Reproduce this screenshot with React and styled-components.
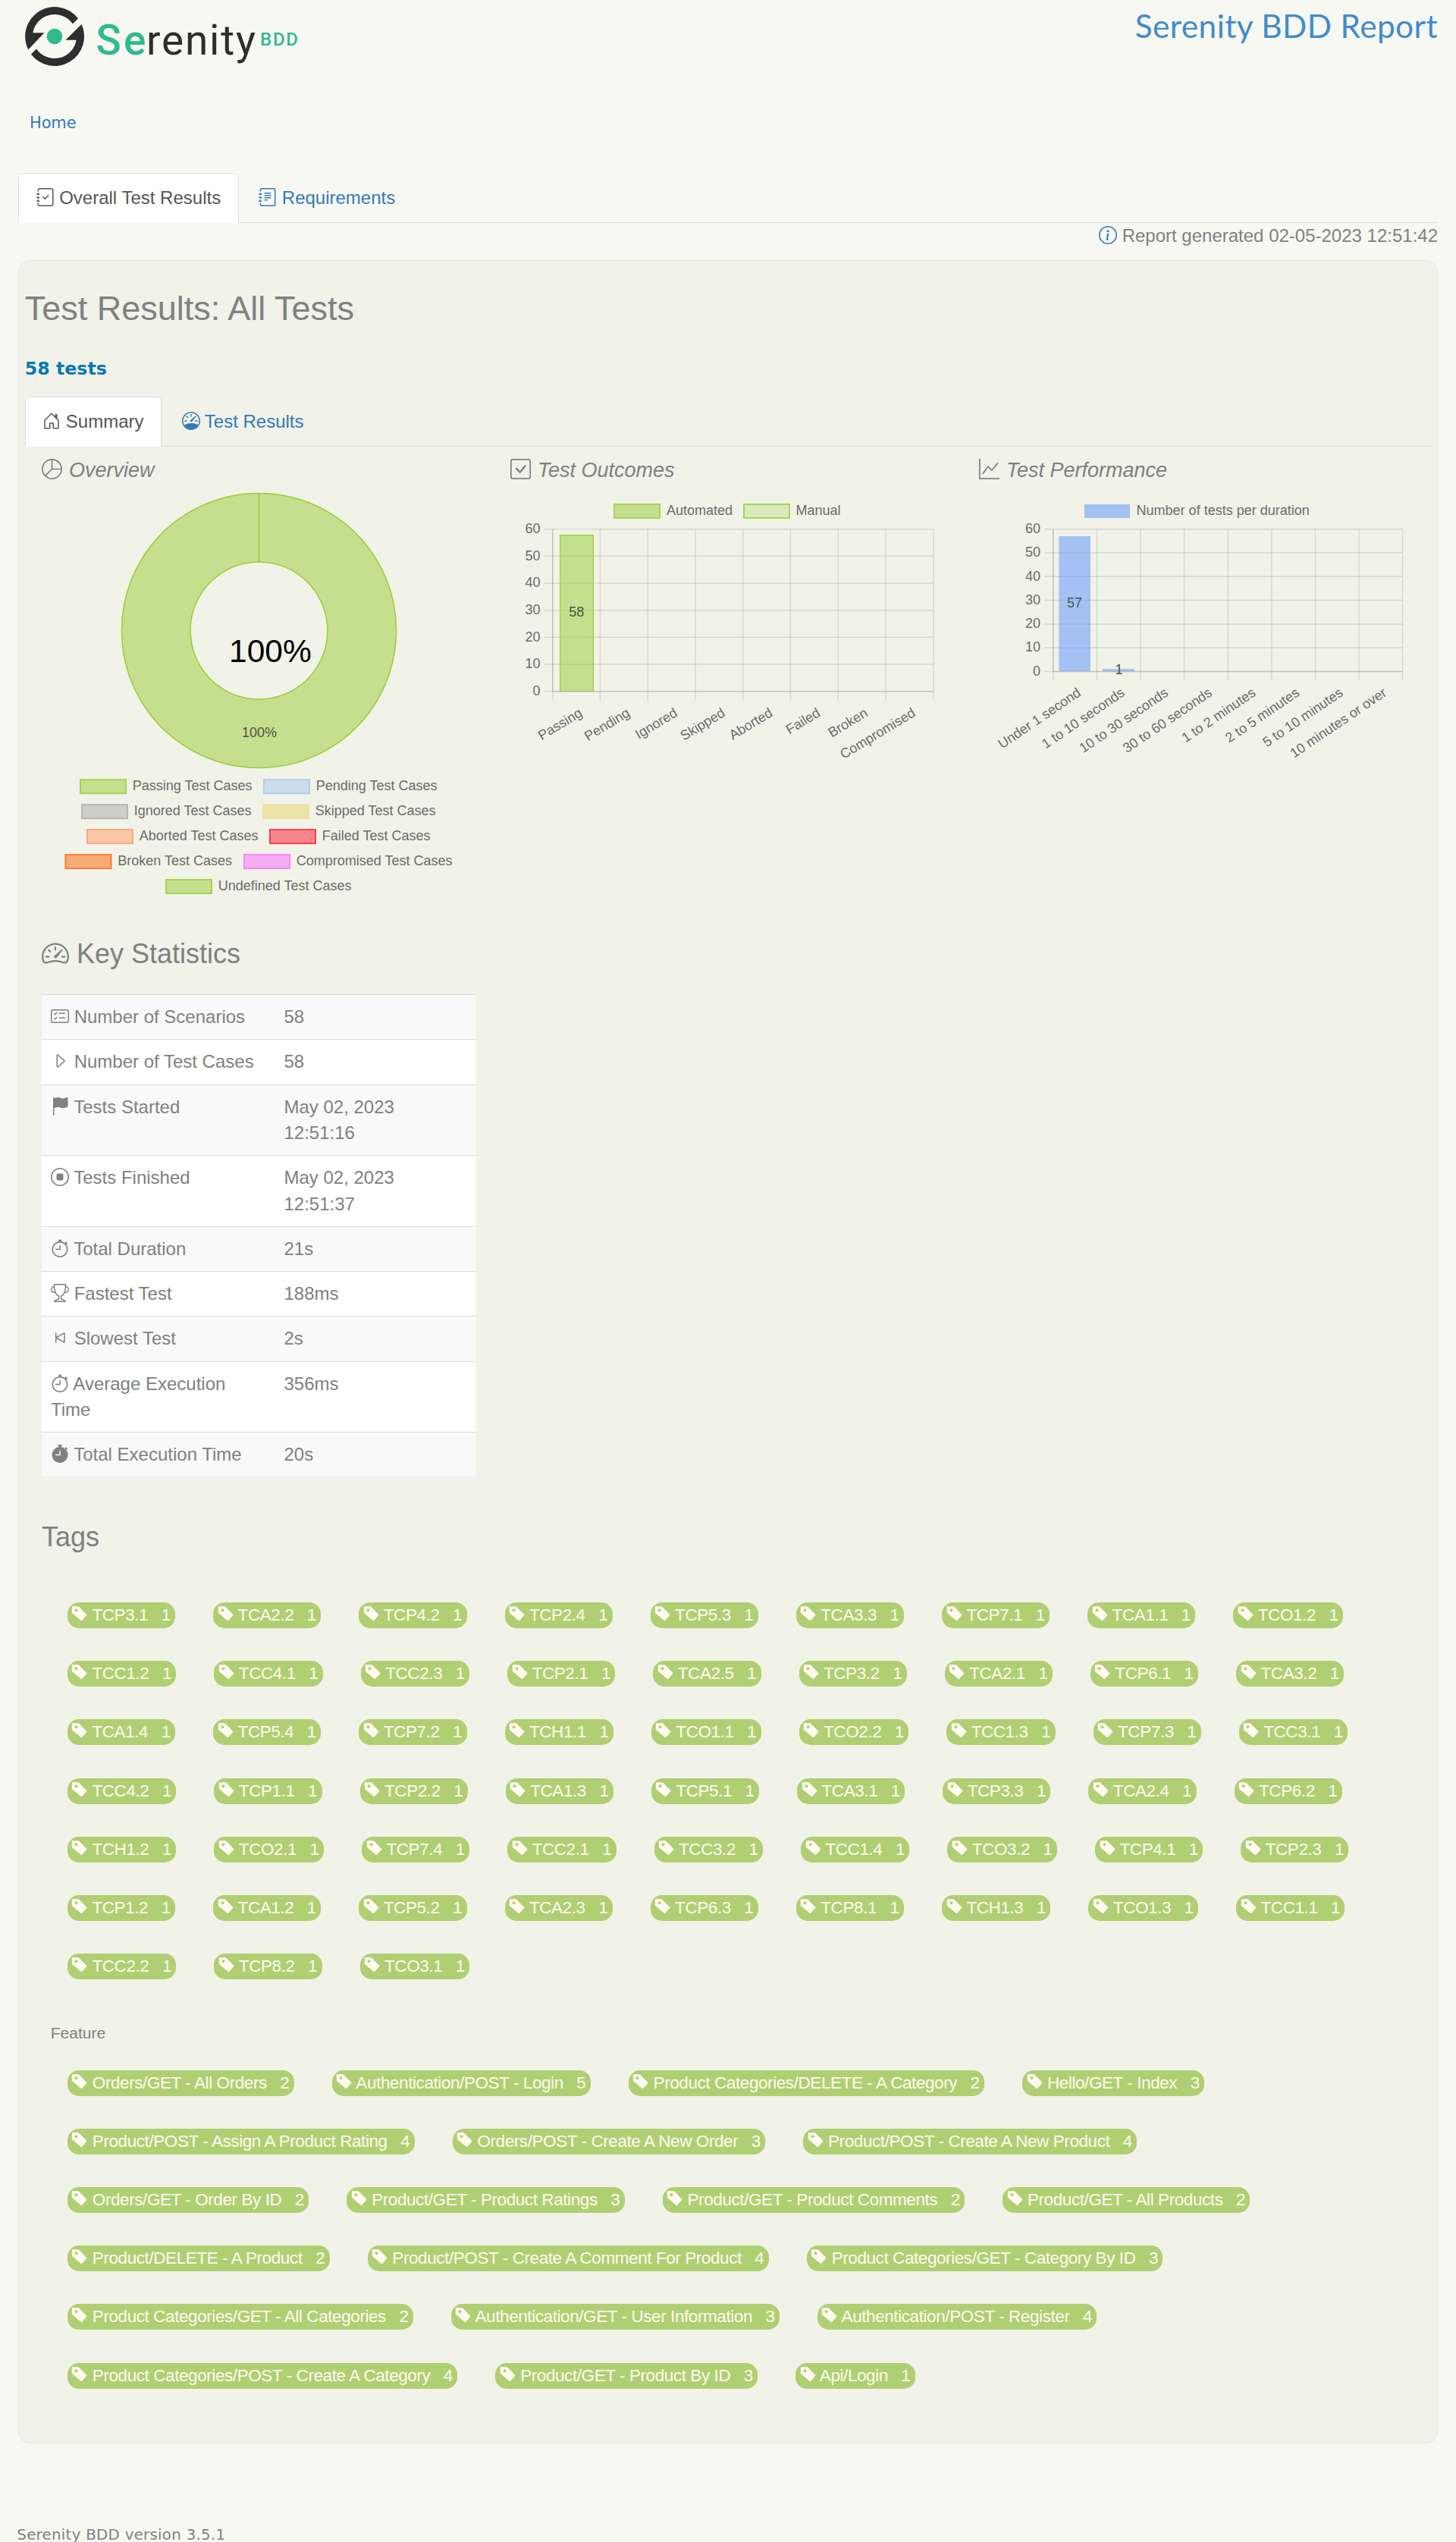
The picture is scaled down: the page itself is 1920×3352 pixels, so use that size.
import React from 'react';
import styled, { createGlobalStyle, css } from 'styled-components';
import {
  BsJournalCheck,
  BsJournalText,
  BsInfoCircle,
  BsHouseDoor,
  BsSpeedometer,
  BsSpeedometer2,
  BsPieChart,
  BsCheckSquare,
  BsGraphUp,
  BsCardChecklist,
  BsCaretRight,
  BsFlagFill,
  BsStopCircle,
  BsStopwatch,
  BsTrophy,
  BsSkipStart,
  BsStopwatchFill,
} from 'react-icons/bs';

const sans = '"Liberation Sans", Arial, sans-serif';
const wide = '"DejaVu Sans", Verdana, sans-serif';

const GlobalStyle = createGlobalStyle`
  *, *::before, *::after { box-sizing: border-box; }
  body {
    margin: 0;
    background: #f8f8f3;
    color: #808080;
    font: 24px/34.28px ${sans};
  }
`;

const Page = styled.div`
  height: 3352px;
  overflow: hidden;
  padding: 0 24px;
`;

const Header = styled.header`
  display: flex;
  justify-content: space-between;
  align-items: flex-start;
  height: 110px;
  padding: 4px 0 0 9px;
`;

const Logo = styled.svg`
  display: block;
  width: 364px;
  height: 90px;
`;

const ReportName = styled.div`
  font: 42.4px/60px Lato, sans-serif;
  letter-spacing: 0.4px;
  color: #428bca;
`;

const Breadcrumb = styled.nav`
  padding: 37px 0 51px 15px;
  font: 21px/30px ${wide};
  letter-spacing: -0.15px;
  color: #337ab7;
`;

const TabBar = styled.div`
  display: flex;
  gap: 3px;
  height: 66px;
  border-bottom: 1px solid #ddd;
`;

const Tab = styled.div`
  height: 66px;
  padding: 15px 22.5px 0;
  border: 1px solid transparent;
  border-bottom: 0;
  border-radius: 6px 6px 0 0;
  white-space: pre;
  color: #337ab7;
  ${(p) =>
    p.$active &&
    css`
      background: #fff;
      border-color: #ddd;
      color: #555;
    `}
  svg {
    vertical-align: -3px;
  }
`;

const Generated = styled.div`
  height: 34px;
  text-align: right;
  white-space: pre;
  svg {
    color: #337ab7;
    vertical-align: -3px;
  }
`;

const Panel = styled.main`
  height: 2879px;
  margin-top: 15px;
  padding: 37.5px 7.5px 0 7.7px;
  background: #f1f2e8;
  border: 1px solid #e7e8df;
  border-radius: 15px;
`;

const PageTitle = styled.h2`
  margin: 0;
  font-weight: 400;
  font-size: 45px;
  line-height: 49.5px;
`;

const TestCount = styled.div`
  margin: 38px 0 20px;
  font: bold 23.7px/34px ${wide};
  color: #0a78b0;
`;

const Columns = styled.div`
  display: grid;
  grid-template-columns: 573px 573px 590px;
  column-gap: 45px;
  padding: 16px 0 0 22.3px;
`;

const ChartTitle = styled.h4`
  margin: 0;
  height: 30px;
  font-size: 27px;
  line-height: 30px;
  font-weight: 400;
  font-style: italic;
  white-space: pre;
  svg {
    margin-right: 1.5px;
    vertical-align: -3.4px;
  }
`;

const Chart = styled.svg`
  display: block;
  text {
    font-family: ${sans};
    font-size: 18px;
    fill: #6b6b6a;
  }
`;

const Section = styled.section`
  margin-left: 22.3px;
`;

const SectionTitle = styled.h3`
  margin: 0;
  padding-top: ${(p) => p.$top}px;
  font-size: 36px;
  line-height: 39.6px;
  font-weight: 400;
  white-space: pre;
  svg {
    vertical-align: -4.5px;
  }
`;

const Stats = styled.div`
  width: 573px;
  margin-top: 33.5px;
`;

const StatRow = styled.div`
  display: grid;
  grid-template-columns: 307.5px 1fr;
  border-top: 1px solid #ddd;
  background: ${(p) => (p.$striped ? '#f9f9f9' : '#fff')};
`;

const StatCell = styled.div`
  padding: 12px;
  white-space: pre-line;
  svg {
    vertical-align: -3px;
  }
`;

const GroupName = styled.div`
  padding-left: 11.8px;
  font-size: 21px;
  line-height: 30px;
`;

const TagList = styled.div`
  display: flex;
  flex-wrap: wrap;
  gap: 43.14px 50px;
  width: 1765px;
  padding: ${(p) => p.$pad};
`;

const Pill = styled.span`
  height: 34px;
  padding: 0 6.4px 0 4.5px;
  border-radius: 15px;
  background: #b0cf73;
  color: #fffaf0;
  font-size: 22.5px;
  line-height: 33px;
  letter-spacing: -0.42px;
  white-space: pre;
`;

const TagGlyph = styled.svg`
  width: 22.5px;
  height: 22.5px;
  vertical-align: -2.6px;
`;

const Footer = styled.footer`
  margin: 104px 0 0 -1.7px;
  font: 19.8px/34px ${wide};
  letter-spacing: 0.28px;
`;

const summaryTags =
  'TCP3.1 TCA2.2 TCP4.2 TCP2.4 TCP5.3 TCA3.3 TCP7.1 TCA1.1 TCO1.2 TCC1.2 TCC4.1 TCC2.3 TCP2.1 TCA2.5 TCP3.2 TCA2.1 TCP6.1 TCA3.2 TCA1.4 TCP5.4 TCP7.2 TCH1.1 TCO1.1 TCO2.2 TCC1.3 TCP7.3 TCC3.1 TCC4.2 TCP1.1 TCP2.2 TCA1.3 TCP5.1 TCA3.1 TCP3.3 TCA2.4 TCP6.2 TCH1.2 TCO2.1 TCP7.4 TCC2.1 TCC3.2 TCC1.4 TCO3.2 TCP4.1 TCP2.3 TCP1.2 TCA1.2 TCP5.2 TCA2.3 TCP6.3 TCP8.1 TCH1.3 TCO1.3 TCC1.1 TCC2.2 TCP8.2 TCO3.1'
    .split(' ')
    .map((name) => [name, 1]);

const featureTags = [
  ['Orders/GET - All Orders', 2],
  ['Authentication/POST - Login', 5],
  ['Product Categories/DELETE - A Category', 2],
  ['Hello/GET - Index', 3],
  ['Product/POST - Assign A Product Rating', 4],
  ['Orders/POST - Create A New Order', 3],
  ['Product/POST - Create A New Product', 4],
  ['Orders/GET - Order By ID', 2],
  ['Product/GET - Product Ratings', 3],
  ['Product/GET - Product Comments', 2],
  ['Product/GET - All Products', 2],
  ['Product/DELETE - A Product', 2],
  ['Product/POST - Create A Comment For Product', 4],
  ['Product Categories/GET - Category By ID', 3],
  ['Product Categories/GET - All Categories', 2],
  ['Authentication/GET - User Information', 3],
  ['Authentication/POST - Register', 4],
  ['Product Categories/POST - Create A Category', 4],
  ['Product/GET - Product By ID', 3],
  ['Api/Login', 1],
];

const stats = [
  [BsCardChecklist, 'Number of Scenarios', '58'],
  [BsCaretRight, 'Number of Test Cases', '58'],
  [BsFlagFill, 'Tests Started', 'May 02, 2023\n12:51:16'],
  [BsStopCircle, 'Tests Finished', 'May 02, 2023\n12:51:37'],
  [BsStopwatch, 'Total Duration', '21s'],
  [BsTrophy, 'Fastest Test', '188ms'],
  [BsSkipStart, 'Slowest Test', '2s'],
  [BsStopwatch, 'Average Execution\nTime', '356ms'],
  [BsStopwatchFill, 'Total Execution Time', '20s'],
];

const donutLegend = [
  [105, 175, 0, 'Passing Test Cases', '#c6df8e', '#a6d44f'],
  [347, 417, 0, 'Pending Test Cases', '#cbddea', '#b0cfef'],
  [107, 177, 1, 'Ignored Test Cases', '#cdcec8', '#b6b7b2'],
  [346, 416, 1, 'Skipped Test Cases', '#ede4aa', '#efe3a2'],
  [114, 184, 2, 'Aborted Test Cases', '#f8c6a8', '#faab7c'],
  [355, 425, 2, 'Failed Test Cases', '#f9858c', '#ff3a4c'],
  [85.5, 155.5, 3, 'Broken Test Cases', '#f8aa76', '#fb7d33'],
  [321, 391, 3, 'Compromised Test Cases', '#f7adf3', '#fa87f6'],
  [218, 288, 4, 'Undefined Test Cases', '#c6df8e', '#a6d44f'],
];

function LegendBox({ x, y, fill, stroke }) {
  return <rect x={x + 1} y={y + 1} width="60" height="18" fill={fill} stroke={stroke} strokeWidth="2" />;
}

function Donut() {
  return (
    <Chart width="573" height="555" viewBox="55 635 573 555">
      <g fill="#c6df8e" stroke="#9acd32" strokeWidth="1.5" fillRule="evenodd">
        <path d="M341.5 650.5a181 181 0 1 1-.01 0zM341.5 741a90.5 90.5 0 1 1-.01 0z" />
        <path d="M341.5 650.5V741" />
      </g>
      <text x="302" y="873" style={{ fontSize: 42.5, fill: '#000' }}>100%</text>
      <text x="342" y="972" textAnchor="middle" style={{ fill: '#4f5247' }}>100%</text>
      {donutLegend.map(([x, tx, row, label, fill, stroke]) => (
        <g key={label}>
          <LegendBox x={x} y={1027.2 + row * 32.95} fill={fill} stroke={stroke} />
          <text x={tx - 0.3} y={1042.3 + row * 32.95}>{label}</text>
        </g>
      ))}
    </Chart>
  );
}

function Axes({ x0, x1, y0, y1, labels, tickX, tilt, drop, children }) {
  const step = (x1 - x0) / labels.length;
  const rise = (y0 - y1) / 6;
  return (
    <>
      <g stroke="#000" strokeOpacity="0.1" strokeWidth="1.5">
        {[1, 2, 3, 4, 5, 6].map((n) => (
          <path key={n} d={`M${tickX} ${y0 - n * rise}H${x1}`} />
        ))}
        <path d={`M${tickX} ${y0}H${x0}M${x0} ${y0}V${y0 + 12}`} />
        {labels.map((l, n) => (
          <path key={l} d={`M${x0 + (n + 1) * step} ${y1}V${y0 + 12}`} />
        ))}
      </g>
      {children}
      <path d={`M${x0} ${y1}V${y0}H${x1}`} fill="none" stroke="#000" strokeOpacity="0.2" strokeWidth="1.5" />
      {[0, 1, 2, 3, 4, 5, 6].map((n) => (
        <text key={n} x={tickX - 5} y={y0 - n * rise + 5.2} textAnchor="end">{n * 10}</text>
      ))}
      {labels.map((l, n) => (
        <text
          key={l}
          textAnchor="end"
          transform={`translate(${x0 + (n + 0.5) * step + 9} ${y0 + drop}) rotate(${-tilt})`}
        >
          {l}
        </text>
      ))}
    </>
  );
}

function Outcomes() {
  return (
    <Chart width="573" height="385" viewBox="673 635 573 385">
      <LegendBox x={809} y={664} fill="#c6df8e" stroke="#a8d556" />
      <text x="879" y="679">Automated</text>
      <LegendBox x={980} y={664} fill="#dbe9bb" stroke="#a8d556" />
      <text x="1049.5" y="679">Manual</text>
      <Axes
        x0={728.7}
        x1={1230.7}
        y0={911.7}
        y1={697.7}
        tickX={717.5}
        tilt={31.2}
        drop={31.6}
        labels={['Passing', 'Pending', 'Ignored', 'Skipped', 'Aborted', 'Failed', 'Broken', 'Compromised']}
      >
        <rect x="738" y="705" width="45" height="206.7" fill="#9acd32" fillOpacity="0.5" />
        <path d="M738.7 911.7V705.7H782.3V911.7" fill="none" stroke="#9acd32" strokeOpacity="0.8" strokeWidth="1.5" />
      </Axes>
      <text x="760.2" y="813" textAnchor="middle" style={{ fill: '#4f5247' }}>58</text>
    </Chart>
  );
}

function Performance() {
  return (
    <Chart width="590" height="385" viewBox="1291 635 590 385">
      <rect x="1430" y="665" width="60" height="18" fill="#a3c1f3" />
      <text x="1498.6" y="679">Number of tests per duration</text>
      <Axes
        x0={1388.8}
        x1={1849.6}
        y0={885.5}
        y1={697.7}
        tickX={1377}
        tilt={34.2}
        drop={30.8}
        labels={[
          'Under 1 second',
          '1 to 10 seconds',
          '10 to 30 seconds',
          '30 to 60 seconds',
          '1 to 2 minutes',
          '2 to 5 minutes',
          '5 to 10 minutes',
          '10 minutes or over',
        ]}
      >
        <rect x="1396.4" y="707" width="41.6" height="178" fill="#5890ff" fillOpacity="0.5" />
        <rect x="1454" y="882.2" width="42" height="3" fill="#5890ff" fillOpacity="0.5" />
      </Axes>
      <text x="1417" y="801" textAnchor="middle" style={{ fill: '#4b5058' }}>57</text>
      <text x="1475.4" y="888.7" textAnchor="middle" style={{ fill: '#4b5058' }}>1</text>
    </Chart>
  );
}

function SerenityLogo() {
  return (
    <Logo viewBox="33 4 364 90">
      <g fill="#2e2e2e">
        <path d="M103 24.3A39 39 0 0 0 37.2 65.5L58.4 43.3H43.4A29 29 0 0 1 95.9 31.6Z" />
        <path d="M107.6 32A39 39 0 0 1 40.9 71.5L48.1 64.4A29 29 0 0 0 100.6 52.7H86.5Z" />
      </g>
      <circle cx="72" cy="48" r="10.3" fill="#2fba90" />
      <g fontFamily="Roboto, sans-serif" fontSize="55">
        <text x="126.5" y="71.5" fontWeight="500" fill="#2fba90" textLength="66">Se</text>
        <text x="193" y="71.5" fontWeight="400" fill="#2e2e2e" textLength="144">renity</text>
      </g>
      <text x="343" y="60" fontFamily="Roboto, sans-serif" fontSize="24" fontWeight="500" fill="#2fba90" textLength="50">
        BDD
      </text>
    </Logo>
  );
}

function Tag({ name, count }) {
  return (
    <Pill>
      <TagGlyph viewBox="0 0 22.5 22.5">
        <path
          fill="currentColor"
          fillRule="evenodd"
          d="M2.8 1.2H10q.7 0 1.2.5L21 11.7q.8.8 0 1.6L15.2 19.7q-.8.8-1.6 0L2.3 10.2q-.5-.5-.5-1.2V2.2q0-1 1-1zM7.5 4.2a2 2 0 1 0 .01 0z"
        />
      </TagGlyph>
      {` ${name}   ${count}`}
    </Pill>
  );
}

export default function App() {
  return (
    <>
      <GlobalStyle />
      <Page>
        <Header>
          <SerenityLogo />
          <ReportName>Serenity BDD Report</ReportName>
        </Header>
        <Breadcrumb>Home</Breadcrumb>
        <TabBar>
          <Tab $active><BsJournalCheck size={24} />{' Overall Test Results'}</Tab>
          <Tab><BsJournalText size={24} />{' Requirements'}</Tab>
        </TabBar>
        <Generated><BsInfoCircle size={24} />{' Report generated 02-05-2023 12:51:42'}</Generated>
        <Panel>
          <PageTitle>Test Results: All Tests</PageTitle>
          <TestCount>58 tests</TestCount>
          <TabBar>
            <Tab $active><BsHouseDoor size={24} />{' Summary'}</Tab>
            <Tab><BsSpeedometer size={24} />{' Test Results'}</Tab>
          </TabBar>
          <Columns>
            <div>
              <ChartTitle><BsPieChart size={27} />{' Overview'}</ChartTitle>
              <Donut />
            </div>
            <div>
              <ChartTitle><BsCheckSquare size={27} />{' Test Outcomes'}</ChartTitle>
              <Outcomes />
            </div>
            <div>
              <ChartTitle><BsGraphUp size={27} />{' Test Performance'}</ChartTitle>
              <Performance />
            </div>
          </Columns>
          <Section>
            <SectionTitle $top={48}><BsSpeedometer2 size={36} />{' Key Statistics'}</SectionTitle>
            <Stats>
              {stats.map(([Icon, label, value], i) => (
                <StatRow key={label} $striped={i % 2 === 0}>
                  <StatCell><Icon size={24} />{` ${label}`}</StatCell>
                  <StatCell>{value}</StatCell>
                </StatRow>
              ))}
            </Stats>
            <SectionTitle $top={59.2}>Tags</SectionTitle>
            <TagList $pad="66.9px 0 56.6px 34px">
              {summaryTags.map(([name, count]) => <Tag key={name} name={name} count={count} />)}
            </TagList>
            <GroupName>Feature</GroupName>
            <TagList $pad="33.4px 0 0 34px">
              {featureTags.map(([name, count]) => <Tag key={name} name={name} count={count} />)}
            </TagList>
          </Section>
        </Panel>
        <Footer>Serenity BDD version 3.5.1</Footer>
      </Page>
    </>
  );
}
